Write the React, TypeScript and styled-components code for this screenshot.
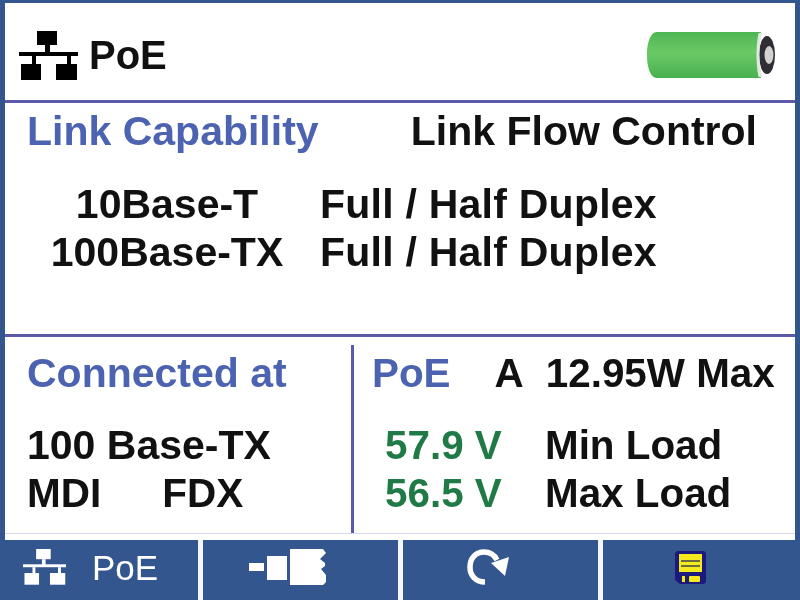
import React from 'react'
import styled, { createGlobalStyle } from 'styled-components'

const GlobalStyle = createGlobalStyle`
    html, body {
        margin: 0;
        padding: 0;
        background: #ffffff;
    }
`

const NetworkIcon = ({ size, color }: { size: number; color: string }) => (
    <svg width={size} height={size * 49 / 59} viewBox="0 0 59 49" fill={color}>
        <rect x="18" y="0" width="20" height="14" />
        <rect x="26" y="14" width="5" height="8" />
        <rect x="0" y="21" width="59" height="4" />
        <rect x="13" y="25" width="4" height="9" />
        <rect x="48" y="25" width="4" height="9" />
        <rect x="2" y="33" width="20" height="16" />
        <rect x="37" y="33" width="21" height="16" />
    </svg>
)

const Battery = () => (
    <svg width="128" height="46" viewBox="0 0 128 46">
        <defs>
            <linearGradient id="batteryBody" x1="0" y1="0" x2="0" y2="1">
                <stop offset="0" stopColor="#4fb654" />
                <stop offset="0.45" stopColor="#6ac965" />
                <stop offset="1" stopColor="#4ab050" />
            </linearGradient>
        </defs>
        <ellipse cx="120" cy="23" rx="8" ry="19" fill="#2e2e34" />
        <ellipse cx="122" cy="23" rx="4.5" ry="9" fill="#d2d2d2" />
        <path d="M10 0H114C112 8 111 16 111 23C111 30 112 38 114 46H10C3 46 0 34 0 23C0 12 3 0 10 0Z" fill="url(#batteryBody)" />
        <path d="M111.500 1H115C113.500 8 112.500 16 112.500 23C112.500 30 113.500 38 115 45H111.500C110 38 109.500 30 109.500 23C109.500 16 110 8 111.500 1Z" fill="#dfe9df" />
    </svg>
)

const ScreenIcon = () => (
    <svg width="31" height="33" viewBox="0 0 31 33">
        <path d="M2 0H29L31 2V31L29 33H5L0 29V2Z" fill="#1c1a7c" />
        <rect x="4" y="3" width="23" height="18" fill="#f5ea1e" />
        <rect x="6" y="9" width="19" height="2" fill="#6b6a40" />
        <rect x="6" y="14" width="19" height="2" fill="#6b6a40" />
        <rect x="7" y="25" width="3" height="6" fill="#f5ea1e" />
        <rect x="14" y="25" width="11" height="6" rx="1" fill="#f5ea1e" />
    </svg>
)

const CableIcon = () => (
    <svg width="78" height="36" viewBox="0 0 78 36" fill="#ffffff">
        <rect x="0" y="14" width="15" height="8" />
        <rect x="18" y="7" width="20" height="24" />
        <path d="M41 0H74L77 4L71 10L76 14V17L72 20L77 26V33L74 36H41Z" />
    </svg>
)

const RefreshIcon = () => (
    <svg width="42" height="36" viewBox="0 0 42 36" fill="none">
        <path d="M18 33C9 33 3 27 3 18C3 9 9 3 17 3C23 3 27 5 30 11" stroke="#ffffff" strokeWidth="5.5" />
        <path d="M24 14L42 8L38 27Z" fill="#ffffff" />
    </svg>
)

const App = () => {
    return (
        <Screen>
            <GlobalStyle />
            <Panel>
                <Header>
                    <Title>
                        <NetworkIcon size={59} color="#000000" />
                        <span>PoE</span>
                    </Title>
                    <Battery />
                </Header>
                <LinkSection>
                    <LinkHeadings>
                        <BlueHeading>Link Capability</BlueHeading>
                        <BlackHeading>Link Flow Control</BlackHeading>
                    </LinkHeadings>
                    <LinkTable>
                        <LinkSpeed>10Base-T</LinkSpeed>
                        <DuplexText>Full / Half Duplex</DuplexText>
                        <LinkSpeed>100Base-TX</LinkSpeed>
                        <DuplexText>Full / Half Duplex</DuplexText>
                    </LinkTable>
                </LinkSection>
                <BottomSection>
                    <ConnectedColumn>
                        <BlueHeading>Connected at</BlueHeading>
                        <ConnectedRows>
                            <div>100 Base-TX</div>
                            <DuplexRow>
                                <span>MDI</span>
                                <span>FDX</span>
                            </DuplexRow>
                        </ConnectedRows>
                    </ConnectedColumn>
                    <PoeColumn>
                        <PoeHeading>
                            <BlueHeading>PoE</BlueHeading>
                            <PortLetter>A</PortLetter>
                            <span>12.95W Max</span>
                        </PoeHeading>
                        <LoadTable>
                            <Voltage>57.9 V</Voltage>
                            <span>Min Load</span>
                            <Voltage>56.5 V</Voltage>
                            <span>Max Load</span>
                        </LoadTable>
                    </PoeColumn>
                </BottomSection>
            </Panel>
            <Footer>
                <FirstButton>
                    <NetworkIcon size={43} color="#ffffff" />
                    <FooterLabel>PoE</FooterLabel>
                </FirstButton>
                <FooterButton>
                    <CableIcon />
                </FooterButton>
                <FooterButton>
                    <RefreshIcon />
                </FooterButton>
                <FooterButton>
                    <ScreenIcon />
                </FooterButton>
            </Footer>
        </Screen>
    )
}

const Screen = styled.div`
    width: 800px;
    height: 600px;
    box-sizing: border-box;
    background: #34568f;
    padding: 3px 5px 0 5px;
    display: flex;
    flex-direction: column;
    overflow: hidden;
    font-family: "Liberation Sans", Arial, sans-serif;
    font-weight: 700;
    font-size: 41px;
    line-height: 48px;
    color: #111111;
    filter: blur(0.5px);
`

const Panel = styled.div`
    height: 537px;
    flex-shrink: 0;
    background: #ffffff;
    display: flex;
    flex-direction: column;
`

const Header = styled.div`
    height: 100px;
    flex-shrink: 0;
    box-sizing: border-box;
    border-bottom: 3px solid #5a5aa8;
    padding: 7px 20px 0 14px;
    display: flex;
    align-items: center;
    justify-content: space-between;
`

const Title = styled.div`
    display: flex;
    align-items: center;
    gap: 11px;
    font-size: 40px;
`

const LinkSection = styled.div`
    height: 234px;
    flex-shrink: 0;
    box-sizing: border-box;
    border-bottom: 3px solid #5a5aa8;
    padding: 4px 0 0 22px;
`

const LinkHeadings = styled.div`
    display: flex;
    justify-content: space-between;
    padding-right: 38px;
`

const BlueHeading = styled.span`
    color: #4b63b0;
`

const BlackHeading = styled.span`
    color: #111111;
`

const LinkTable = styled.div`
    margin-top: 25px;
    display: grid;
    grid-template-columns: 280px auto;
    justify-content: start;
    column-gap: 13px;
`

const LinkSpeed = styled.span`
    text-align: center;
`

const DuplexText = styled.span`
    letter-spacing: 0.24px;
`

const BottomSection = styled.div`
    height: 197px;
    flex-shrink: 0;
    box-sizing: border-box;
    display: grid;
    grid-template-columns: 349px 1fr;
    padding-top: 8px;
    border-bottom: 1px solid #d5d8ee;
`

const ConnectedColumn = styled.div`
    box-sizing: border-box;
    border-right: 3px solid #5a5aa8;
    padding: 4px 0 0 22px;
    display: flex;
    flex-direction: column;
    gap: 24px;
`

const ConnectedRows = styled.div`
    display: flex;
    flex-direction: column;
`

const DuplexRow = styled.div`
    display: flex;
    gap: 61px;
    font-size: 40.500px;
`

const PoeColumn = styled.div`
    padding: 4px 0 0 18px;
    display: flex;
    flex-direction: column;
    gap: 24px;
    white-space: nowrap;
    font-size: 40.400px;
`

const PoeHeading = styled.div`
    display: flex;
`

const PortLetter = styled.span`
    margin: 0 22px 0 44px;
`

const LoadTable = styled.div`
    display: grid;
    grid-template-columns: 160px auto;
    padding-left: 13px;
`

const Voltage = styled.span`
    color: #1f7a45;
`

const Footer = styled.div`
    flex: 1;
    display: grid;
    grid-template-columns: 203px 200px 200px 1fr;
    margin: 0 -5px;
`

const FooterButton = styled.div`
    box-sizing: border-box;
    border-right: 5px solid #f4f6fb;
    padding: 0 25px 6px 0;
    display: flex;
    align-items: center;
    justify-content: center;

    &:last-child {
        border-right: none;
        padding-right: 22px;
    }
`

const FirstButton = styled(FooterButton)`
    padding-left: 23px;
    padding-right: 0;
    justify-content: flex-start;
    gap: 26px;
`

const FooterLabel = styled.span`
    color: #ffffff;
    font-size: 35px;
    font-weight: 400;
    line-height: 1;
`

export default App
